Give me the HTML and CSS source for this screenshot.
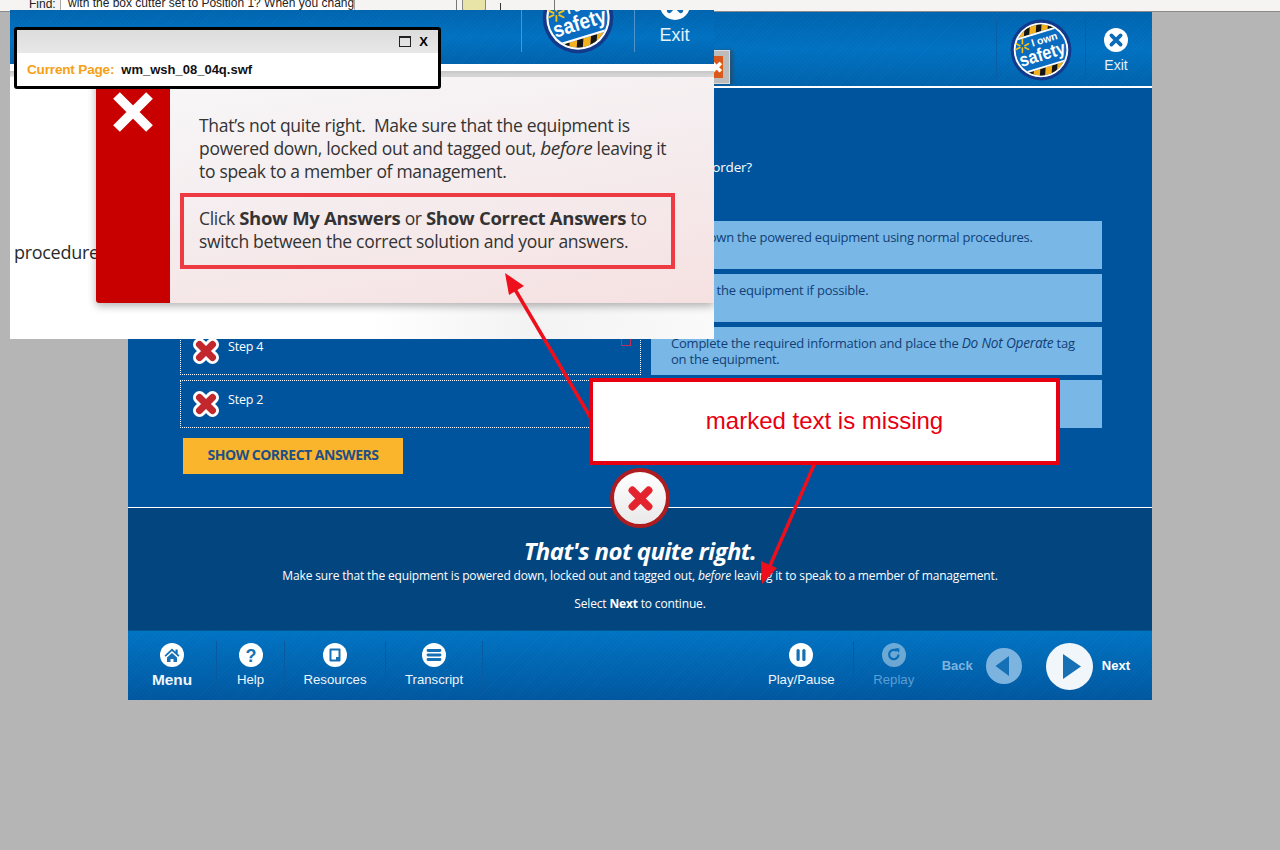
FILE: index.html
```html
<!DOCTYPE html>
<html lang="en">
<head>
    <meta charset="UTF-8">
    <meta name="viewport" content="width=device-width, initial-scale=1.0">
    <title>I Own Safety Course</title>
    <link rel="stylesheet" href="styles.css">
</head>
<body>
    <svg class="defs" width="0" height="0">
        <defs>
            <clipPath id="logoClip"><circle cx="50" cy="50" r="41"/></clipPath>
            <symbol id="logo" viewBox="0 0 100 100">
                <circle cx="50" cy="50" r="49" fill="#12398a"/>
                <circle cx="50" cy="50" r="44" fill="#fff"/>
                <circle cx="50" cy="50" r="41" fill="#0a6cc0"/>
                <g clip-path="url(#logoClip)">
                    <g transform="rotate(-17 50 50)">
                        <rect x="0" y="0" width="100" height="21" fill="#f3b11e"/>
                        <rect x="0" y="79" width="100" height="21" fill="#f3b11e"/>
                        <path d="M18 0h9l-8 21h-9zM38 0h9l-8 21h-9zM58 0h9l-8 21h-9zM78 0h9l-8 21h-9zM20 79h9l-8 21h-9zM40 79h9l-8 21h-9zM60 79h9l-8 21h-9zM80 79h9l-8 21h-9z" fill="#151515"/>
                        <rect x="0" y="21" width="100" height="3" fill="#fff"/>
                        <rect x="0" y="76" width="100" height="3" fill="#fff"/>
                    </g>
                </g>
                <g stroke="#f6c21c" stroke-width="2.6" stroke-linecap="round">
                    <path d="M20 40v-7M20 47v7M16 43l-6-3M24 43l6-3M16 46l-6 3M24 46l6 3"/>
                </g>
                <g transform="rotate(-17 50 50)" fill="#fff" font-family="'Liberation Sans', sans-serif" font-weight="700" text-anchor="middle">
                    <text x="60" y="41" font-size="17">I own</text>
                    <text x="50" y="67" font-size="30" textLength="76" lengthAdjust="spacingAndGlyphs">safety</text>
                </g>
            </symbol>
            <symbol id="exitIcon" viewBox="0 0 26 26">
                <circle cx="13" cy="13" r="13" fill="#fff"/>
                <path d="M8 8l10 10M18 8L8 18" stroke="#0a6cb8" stroke-width="4" stroke-linecap="round"/>
            </symbol>
            <symbol id="stepX" viewBox="0 0 28 28">
                <path d="M7.5 7.5l13 13M20.5 7.5l-13 13" stroke="#fff" stroke-width="13" stroke-linecap="round"/>
                <path d="M7.5 7.5l13 13M20.5 7.5l-13 13" stroke="#c1272d" stroke-width="7" stroke-linecap="round"/>
            </symbol>
        </defs>
    </svg>

    <div class="browser-bar">
        <span class="find-label">Find:</span>
        <span class="find-input">with the box cutter set to Position 1? When you chang</span>
        <span class="bar-sep"></span>
        <span class="bar-btn"></span>
        <span class="bar-tick"></span>
        <span class="bar-sep bar-sep-last"></span>
    </div>

    <div class="course">
        <header class="course-header">
            <div class="logo-cell">
                <svg class="logo" width="62" height="62"><use href="#logo"/></svg>
            </div>
            <div class="exit-cell">
                <svg width="24" height="24"><use href="#exitIcon"/></svg>
                <span>Exit</span>
            </div>
        </header>

        <main class="question">
            <p class="question-text">Put the steps for locking out equipment in the correct order?</p>
            <div class="step-grid">
                <div class="step-list">
                    <div class="step"><svg width="28" height="28"><use href="#stepX"/></svg><span>Step 1</span></div>
                    <div class="step"><svg width="28" height="28"><use href="#stepX"/></svg><span>Step 3</span></div>
                    <div class="step"><svg width="28" height="28"><use href="#stepX"/></svg><span>Step 4</span><i class="step-mark"></i></div>
                    <div class="step"><svg width="28" height="28"><use href="#stepX"/></svg><span>Step 2</span></div>
                </div>
                <div class="answer-list">
                    <div class="answer">Shut down the powered equipment using normal procedures.</div>
                    <div class="answer">Unplug the equipment if possible.</div>
                    <div class="answer">Complete the required information and place the <em>Do Not Operate</em> tag on the equipment.</div>
                    <div class="answer">Speak to a member of management.</div>
                </div>
            </div>
            <button class="show-btn">SHOW CORRECT ANSWERS</button>
        </main>

        <section class="feedback">
            <h2>That's not quite right.</h2>
            <p>Make sure that the equipment is powered down, locked out and tagged out, <em>before</em> leaving it to speak to a member of management.</p>
            <p class="feedback-next">Select <b>Next</b> to continue.</p>
        </section>

        <nav class="course-nav">
            <div class="nav-item nav-menu">
                <svg class="nav-icon" viewBox="0 0 24 24"><circle cx="12" cy="12" r="12" fill="#fff"/><path d="M4.5 12.5L12 5.5l3.5 3.2V6.5h2.2v4.3l1.8 1.7-1.2 1.2L12 8l-6.3 5.7zM7 14.5l5-4.5 5 4.5V19h-3.5v-3h-3v3H7z" fill="#1670b6"/></svg>
                <span>Menu</span>
            </div>
            <div class="nav-item nav-help">
                <svg class="nav-icon" viewBox="0 0 24 24"><circle cx="12" cy="12" r="12" fill="#fff"/><text x="12" y="18.5" text-anchor="middle" font-family="'Liberation Sans', sans-serif" font-weight="700" font-size="18" fill="#1670b6">?</text></svg>
                <span>Help</span>
            </div>
            <div class="nav-item nav-resources">
                <svg class="nav-icon" viewBox="0 0 24 24"><circle cx="12" cy="12" r="12" fill="#fff"/><path d="M7.5 5.5h9a1 1 0 0 1 1 1v11a1 1 0 0 1-1 1h-9a1 1 0 0 1-1-1v-11a1 1 0 0 1 1-1z" fill="#1670b6"/><rect x="8.5" y="7.5" width="7" height="9" fill="#fff"/><rect x="13" y="14" width="3.5" height="3.5" fill="#1670b6"/></svg>
                <span>Resources</span>
            </div>
            <div class="nav-item nav-transcript">
                <svg class="nav-icon" viewBox="0 0 24 24"><circle cx="12" cy="12" r="12" fill="#fff"/><path d="M6 7.5h12M6 12h12M6 16.5h12" stroke="#1670b6" stroke-width="2.8" stroke-linecap="round"/></svg>
                <span>Transcript</span>
            </div>
            <div class="nav-right">
                <div class="nav-item nav-play">
                    <svg class="nav-icon" viewBox="0 0 24 24"><circle cx="12" cy="12" r="12" fill="#fff"/><rect x="7.5" y="6" width="3.2" height="12" rx="1.5" fill="#1670b6"/><rect x="13.3" y="6" width="3.2" height="12" rx="1.5" fill="#1670b6"/></svg>
                    <span>Play/Pause</span>
                </div>
                <div class="nav-item nav-replay">
                    <svg class="nav-icon" viewBox="0 0 24 24"><circle cx="12" cy="12" r="12" fill="#fff"/><path d="M16.5 11.5a4.7 4.7 0 1 1-1.6-3.5" fill="none" stroke="#1670b6" stroke-width="2.2"/><path d="M13 5l4.5 0.5-0.5 4.5z" fill="#1670b6"/></svg>
                    <span>Replay</span>
                </div>
                <div class="nav-back">
                    <span>Back</span>
                    <svg width="36" height="36" viewBox="0 0 36 36"><circle cx="18" cy="18" r="18" fill="#7db4df"/><path d="M23 8v20L9.5 18z" fill="#1670b6"/></svg>
                </div>
                <div class="nav-next">
                    <svg width="47" height="47" viewBox="0 0 47 47"><circle cx="23.5" cy="23.5" r="23.5" fill="#f1f6fb"/><path d="M17 11v25l18-12.5z" fill="#1670b6"/></svg>
                    <span>Next</span>
                </div>
            </div>
        </nav>
    </div>

    <div class="old-close"><span>&#10006;</span></div>

    <div class="popup">
        <div class="popup-header">
            <div class="logo-cell">
                <svg class="logo" width="72" height="72"><use href="#logo"/></svg>
            </div>
            <div class="exit-cell">
                <svg width="30" height="30"><use href="#exitIcon"/></svg>
                <span>Exit</span>
            </div>
        </div>
        <div class="popup-stripe"></div>
        <div class="popup-stage">
            <div class="popup-left">procedures</div>
            <div class="card">
                <div class="card-strip">
                    <svg width="40" height="40" viewBox="0 0 40 40"><path d="M3.5 3.5l33 33M36.5 3.5l-33 33" stroke="#fff" stroke-width="9.5"/></svg>
                </div>
                <div class="card-body">
                    <p>That&rsquo;s not quite right.&nbsp; Make sure that the equipment is powered down, locked out and tagged out, <em>before</em> leaving it to speak to a member of management.</p>
                    <div class="card-marked">
                        Click <b>Show My Answers</b> or <b>Show Correct Answers</b> to switch between the correct solution and your answers.
                    </div>
                </div>
            </div>
        </div>
    </div>

    <div class="debug">
        <div class="debug-title">
            <i class="debug-max"></i>
            <b>X</b>
        </div>
        <div class="debug-body">
            <span class="debug-label">Current Page:</span>
            <span class="debug-file">wm_wsh_08_04q.swf</span>
        </div>
    </div>

    <div class="wrong-badge">
        <svg width="27" height="27" viewBox="0 0 30 30"><path d="M6 6l18 18M24 6L6 24" stroke="#e3242f" stroke-width="8.5" stroke-linecap="round"/></svg>
    </div>

    <!-- review markup on top of the screenshot -->
    <svg class="arrows" width="1280" height="850" viewBox="0 0 1280 850">
        <g stroke="#ee0f1c" stroke-width="3.5">
            <path d="M592 420L513 286"/>
            <path d="M817 458L769 568"/>
        </g>
        <g fill="#ee0f1c">
            <path d="M505 273l19 13-15 9z"/>
            <path d="M762 584l-1-23 16 7z"/>
        </g>
    </svg>
    <div class="callout">marked text is missing</div>
</body>
</html>
```

FILE: styles.css
```css
body {
    font-family: 'Open Sans', 'Liberation Sans', sans-serif;
    background-color: #b5b5b5;
    margin: 0;
    padding: 0;
    height: 850px;
    position: relative;
    overflow: hidden;
}

.defs {
    position: absolute;
}

/* top browser strip */
.browser-bar {
    height: 11px;
    background-color: #f6f4f2;
    border-bottom: 1px solid #8a8a8a;
    display: flex;
    align-items: flex-end;
    font-family: 'Liberation Sans', sans-serif;
    font-size: 12px;
    line-height: 14px;
    color: #222;
    overflow: hidden;
}

.find-label {
    margin-left: 29px;
    width: 31px;
    flex: none;
}

.find-input {
    width: 286px;
    padding-left: 7px;
    flex: none;
    height: 14px;
    background-color: #fff;
    border: 1px solid #a9a9a9;
    overflow: hidden;
    white-space: nowrap;
}

.bar-sep {
    width: 1px;
    height: 14px;
    margin-left: 101px;
    background-color: #777;
    flex: none;
}

.bar-btn {
    width: 22px;
    height: 14px;
    margin-left: 5px;
    background-color: #e8e4a8;
    border: 1px solid #888;
    border-radius: 2px;
    flex: none;
}

.bar-tick {
    width: 1px;
    height: 8px;
    margin-left: 14px;
    background-color: #333;
    flex: none;
}

.bar-sep-last {
    margin-left: 53px;
}

/* course window */
.course {
    width: 1024px;
    margin-left: 128px;
}

.course-header,
.popup-header {
    background-image:
        repeating-linear-gradient(135deg, rgba(255, 255, 255, 0.02) 0, rgba(255, 255, 255, 0.02) 1px, transparent 1px, transparent 3px),
        linear-gradient(#0064af, #0071c1 50%, #0062ac);
}

.course-header {
    height: 74px;
    display: flex;
    justify-content: flex-end;
    border-bottom: 2px solid #fff;
}

.logo-cell {
    width: 88px;
    height: 60px;
    margin-top: 7px;
    border-left: 1px solid #0a5ea6;
    border-right: 1px solid #0a5ea6;
    display: flex;
    justify-content: center;
}

.logo {
    margin-top: 0;
    flex: none;
}

.exit-cell {
    width: 60px;
    margin-right: 6px;
    display: flex;
    flex-direction: column;
    align-items: center;
    padding-top: 16px;
    color: #e6f1fa;
    font-family: 'Liberation Sans', sans-serif;
    font-size: 14px;
    line-height: 18px;
}

.exit-cell span {
    margin-top: 4px;
}

.question {
    height: 419px;
    background-color: #00549d;
    border-bottom: 1px solid #fff;
    padding-top: 0;
    position: relative;
}

.question-text {
    margin: 0;
    padding-top: 70px;
    width: 624px;
    height: 133px;
    box-sizing: border-box;
    text-align: right;
    color: #fff;
    font-size: 13.5px;
    line-height: 18px;
    white-space: nowrap;
    letter-spacing: -0.2px;
}

.step-grid {
    display: flex;
    margin-left: 52px;
    gap: 10px;
}

.step-list,
.answer-list {
    display: flex;
    flex-direction: column;
    gap: 5px;
}

.step-list {
    width: 461px;
}

.answer-list {
    width: 451px;
}

.step {
    height: 48px;
    box-sizing: border-box;
    border: 1px dotted #fff;
    display: flex;
    padding: 9px 0 0 11px;
    color: #fff;
    font-size: 12.5px;
    line-height: 18px;
    position: relative;
    letter-spacing: -0.2px;
}

.step span {
    margin: 1px 0 0 8px;
}

.step-mark {
    position: absolute;
    right: 9px;
    top: 10px;
    width: 8px;
    height: 6px;
    border: 1px solid #c0305a;
}

.answer {
    height: 48px;
    box-sizing: border-box;
    background-color: #79b7e7;
    padding: 8px 20px;
    color: #123f75;
    font-size: 13px;
    line-height: 16px;
    letter-spacing: -0.22px;
}

.answer em {
    font-size: 13.7px;
}

.show-btn {
    display: block;
    margin: 10px 0 0 55px;
    width: 220px;
    height: 36px;
    padding: 0 0 3px;
    background-color: #fbb52c;
    border: none;
    color: #1e4f86;
    font-family: 'Open Sans', sans-serif;
    font-size: 14px;
    font-weight: 700;
    letter-spacing: -0.5px;
}

.feedback {
    height: 122px;
    box-sizing: border-box;
    background-color: #03467f;
    padding-top: 30px;
    color: #fff;
    text-align: center;
    font-size: 12px;
    letter-spacing: -0.16px;
}

.feedback h2 {
    margin: 0;
    font-size: 24px;
    line-height: 26px;
    font-style: italic;
    font-weight: 700;
    letter-spacing: -0.6px;
}

.feedback p {
    margin: 4px 0 0;
    line-height: 16px;
}

.feedback .feedback-next {
    margin-top: 12px;
}

/* bottom nav */
.course-nav {
    height: 70px;
    display: flex;
    background-image:
        repeating-linear-gradient(135deg, rgba(255, 255, 255, 0.02) 0, rgba(255, 255, 255, 0.02) 1px, transparent 1px, transparent 3px),
        linear-gradient(#0073c3, #00579f);
    border-top: 1px solid #03568f;
    box-sizing: border-box;
    color: #eef5fb;
    font-family: 'Liberation Sans', sans-serif;
    font-size: 13.2px;
}

.nav-item {
    display: flex;
    flex-direction: column;
    align-items: center;
    height: 49px;
    margin-top: 10px;
    padding-top: 2px;
    border-right: 1px solid #0a5a9f;
    line-height: 16px;
}

.nav-icon {
    width: 24px;
    height: 24px;
    margin-bottom: 5px;
}

.nav-menu {
    width: 88px;
    font-size: 15.4px;
    font-weight: 700;
}

.nav-help {
    width: 67px;
}

.nav-resources {
    width: 100px;
}

.nav-transcript {
    width: 96px;
}

.nav-right {
    margin-left: auto;
    display: flex;
    align-items: flex-start;
}

.nav-play {
    width: 103px;
}

.nav-replay {
    width: 80px;
    border-right: none;
    color: #5a9fd4;
}

.nav-replay .nav-icon {
    opacity: 0.42;
}

.nav-back,
.nav-next {
    display: flex;
    align-items: center;
    font-weight: 700;
    font-size: 13px;
    gap: 13px;
}

.nav-back {
    margin: 17px 0 0 8px;
    color: #7db4df;
}

.nav-back span {
    margin-top: -2px;
}

.nav-next {
    margin: 12px 22px 0 24px;
    gap: 9px;
    color: #fff;
}

.nav-next span {
    margin-top: -2px;
}

/* leftover close button between popup and course */
.old-close {
    position: absolute;
    left: 690px;
    top: 50px;
    width: 38px;
    height: 32px;
    background-color: #bcbcbc;
    border: 1px solid #dcdcdc;
    box-shadow: 3px 0 3px rgba(60, 60, 60, 0.5);
    display: flex;
    justify-content: flex-end;
    align-items: center;
}

.old-close span {
    width: 24px;
    margin-right: 6px;
    background-color: #d9591c;
    color: #fff;
    font-size: 16px;
    line-height: 22px;
    text-align: right;
}

/* screenshot pasted on top */
.popup {
    position: absolute;
    left: 10px;
    top: 10px;
    width: 704px;
    height: 329px;
    overflow: hidden;
    background: linear-gradient(100deg, #fff 55%, #f3f3f3 75%, #fafafa 100%);
}

.popup-header {
    height: 54px;
    display: flex;
    justify-content: flex-end;
}

.popup-header .logo-cell {
    width: 112px;
    height: 42px;
    margin-top: 0;
    border-color: #4d94cf;
}

.popup-header .logo {
    margin-top: -28px;
}

.popup-header .exit-cell {
    width: 79px;
    margin-right: 0;
    padding-top: 0;
    color: #e6f1fa;
    font-size: 18px;
    line-height: 20px;
}

.popup-header .exit-cell svg {
    margin-top: -20px;
    flex: none;
}

.popup-header .exit-cell span {
    margin-top: 5px;
}

.popup-stripe {
    height: 13px;
    background: linear-gradient(#fff 7px, #c6c6c6 7px, #e6e6e6 13px);
}

.popup-stage {
    display: flex;
}

.popup-left {
    width: 86px;
    flex: none;
    overflow: hidden;
    box-sizing: border-box;
    padding: 163px 0 0 4px;
    color: #2a2a2a;
    font-size: 18px;
    line-height: 24px;
    white-space: nowrap;
    letter-spacing: -0.3px;
}

.card {
    flex: 1;
    height: 226px;
    display: flex;
    background: linear-gradient(170deg, #f8f8f9 0%, #f5ecee 50%, #f6e1e1 100%);
    box-shadow: 0 3px 8px rgba(0, 0, 0, 0.3);
    border-bottom-left-radius: 3px;
}

.card-strip {
    width: 74px;
    flex: none;
    background-color: #c90000;
    box-sizing: border-box;
    padding: 15px 0 0 17px;
    border-bottom-left-radius: 3px;
}

.card-body {
    flex: 1;
    padding: 37px 0 0 10px;
    color: #333;
    font-size: 17.5px;
    line-height: 23px;
    letter-spacing: -0.3px;
}

.card-body p {
    margin: 0 0 0 19px;
    width: 475px;
}

.card-body em {
    font-size: 19px;
}

.card-marked {
    width: 495px;
    height: 76px;
    box-sizing: border-box;
    margin-top: 10px;
    border: 4px solid #ee3a43;
    padding: 9px 10px 0 15px;
}

.card-marked b {
    font-size: 18.5px;
}

/* debug window */
.debug {
    position: absolute;
    left: 14px;
    top: 27px;
    width: 427px;
    height: 62px;
    box-sizing: border-box;
    border: 3px solid #000;
    border-radius: 3px;
    background-color: #fff;
    font-family: 'Liberation Sans', sans-serif;
}

.debug-title {
    height: 23px;
    background: linear-gradient(#dcdcdc, #e8e8e8);
    display: flex;
    justify-content: flex-end;
    align-items: center;
    gap: 8px;
    padding-right: 10px;
    font-size: 13px;
}

.debug-max {
    width: 10px;
    height: 8px;
    border: 1px solid #222;
    border-top-width: 2px;
}

.debug-body {
    padding: 9px 0 0 10px;
    font-size: 13px;
    line-height: 16px;
    font-weight: 700;
    display: flex;
    gap: 7px;
}

.debug-label {
    color: #f6a016;
    font-size: 13.6px;
    letter-spacing: -0.2px;
}

.debug-file {
    color: #111;
}

.wrong-badge {
    position: absolute;
    left: 610px;
    top: 468px;
    width: 60px;
    height: 60px;
    box-sizing: border-box;
    border: 4px solid #ae1c20;
    border-radius: 50%;
    background: linear-gradient(#fff, #e9e9e9);
    display: flex;
    justify-content: center;
    align-items: center;
}

.arrows {
    position: absolute;
    left: 0;
    top: 0;
}

.callout {
    position: absolute;
    left: 589px;
    top: 378px;
    width: 471px;
    height: 87px;
    box-sizing: border-box;
    border: 4px solid #e60012;
    background-color: #fff;
    color: #e60012;
    font-family: 'Liberation Sans', sans-serif;
    font-size: 24px;
    line-height: 77px;
    text-align: center;
}
```
